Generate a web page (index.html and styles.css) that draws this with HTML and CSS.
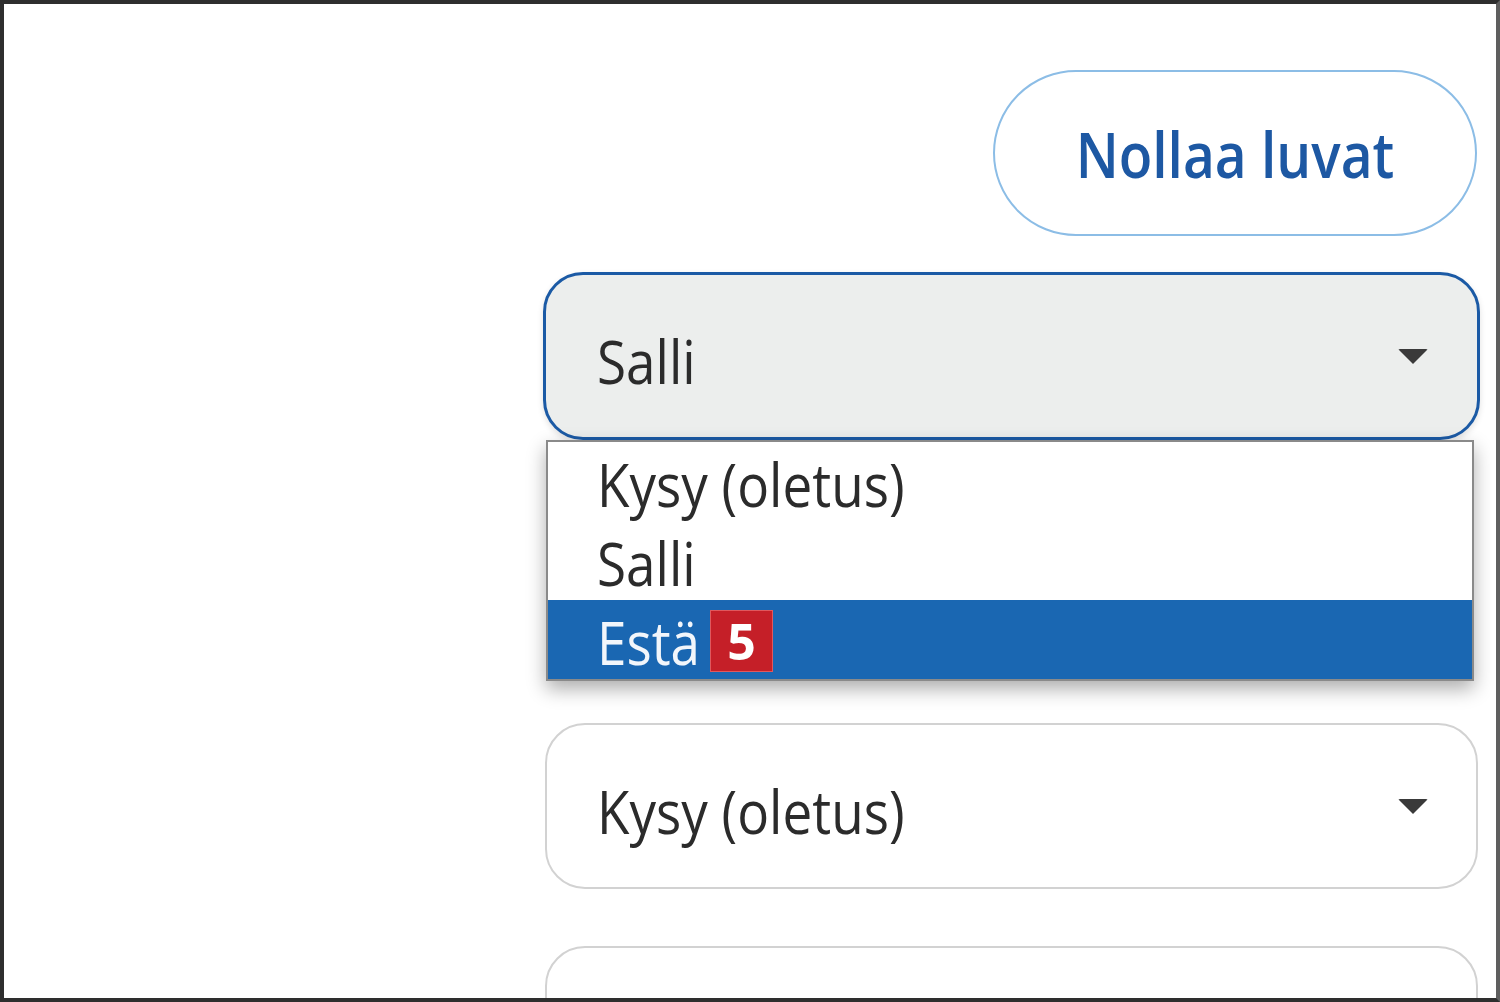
FILE: index.html
```html
<!DOCTYPE html>
<html>
<head>
	<title>Sivuston luvat</title>
	<link rel="stylesheet" href="styles.css">
</head>
<body>

	<div id="frame">
		<div id="panel">

			<button id="reset" type="button"><span class="txt">Nollaa luvat</span></button>

			<div class="field open">
				<div class="select focus">
					<span class="txt">Salli</span>
					<span class="caret"></span>
				</div>
				<ul class="menu">
					<li><span class="txt">Kysy (oletus)</span></li>
					<li><span class="txt">Salli</span></li>
					<li class="sel"><span class="txt">Estä</span><span class="badge">5</span></li>
				</ul>
			</div>

			<div class="field">
				<div class="select">
					<span class="txt">Kysy (oletus)</span>
					<span class="caret"></span>
				</div>
			</div>

			<div class="field">
				<div class="select">
					<span class="txt"></span>
					<span class="caret"></span>
				</div>
			</div>

		</div>
	</div>

</body>
</html>
```

FILE: styles.css
```css
body {
	margin : 0;
	font-family : "Open Sans", "DejaVu Sans", sans-serif;
	color : #2b2b2b;
}

#frame {
	width : 1500px;
	height : 1002px;
	box-sizing : border-box;
	border : 4px solid #2e2e2e;
	border-right-color : #5e5e5e;
	background : #fff;
	overflow : hidden;
}

#panel {
	margin-left : 541px;
	width : 933px;
	padding-top : 66px;
	display : flex;
	flex-direction : column;
}

.txt {
	display : inline-block;
	transform : scaleY(1.13);
}

#reset {
	align-self : flex-end;
	margin-right : 1px;
	width : 484px;
	height : 166px;
	border : 2px solid #8cbde6;
	border-radius : 83px;
	background : #fff;
	color : #1d58a3;
	font-family : "Open Sans", sans-serif;
	font-weight : 600;
	font-size : 55px;
	padding : 0;
}

#reset .txt {
	transform : scaleY(1.15);
}

.field {
	position : relative;
	margin-top : 57px;
}

.field.open {
	margin-top : 36px;
	margin-left : -2px;
	margin-right : -2px;
	margin-bottom : 226px;
}

.select {
	height : 166px;
	box-sizing : border-box;
	border : 2px solid #d2d2d2;
	border-radius : 40px;
	background : #fff;
	display : flex;
	align-items : center;
	justify-content : space-between;
	padding : 0 48px 0 50px;
	font-size : 53px;
}

.select .txt {
	margin-top : 8px;
}

.select.focus {
	height : 168px;
	border : 3px solid #1b5aa5;
	background : #eceeed;
	padding : 0 49px 0 51px;
	box-shadow : 0 3px 6px rgba(0, 0, 0, 0.12);
}

.caret {
	width : 0;
	height : 0;
	border-left : 15px solid transparent;
	border-right : 15px solid transparent;
	border-top : 15px solid #3a3a3a;
	border-radius : 2px;
}

.menu {
	position : absolute;
	top : 100%;
	left : 3px;
	width : 928px;
	box-sizing : border-box;
	margin : 0;
	padding : 0;
	list-style : none;
	background : #fff;
	border : 2px solid #8a8a8a;
	box-shadow : 0 8px 18px rgba(0, 0, 0, 0.32);
	z-index : 5;
	font-size : 53px;
}

.menu li {
	height : 79px;
	display : flex;
	align-items : center;
	padding-left : 49px;
}

.menu li .txt {
	margin-top : 4px;
}

.menu li.sel {
	background : #1a67b2;
	color : #f2f6fb;
}

.badge {
	width : 63px;
	height : 62px;
	box-sizing : border-box;
	margin-left : 10px;
	margin-top : 2px;
	background : #c51f28;
	border : 1px solid #e0585d;
	color : #fff;
	font-weight : 700;
	font-size : 50px;
	display : flex;
	align-items : center;
	justify-content : center;
}
```
